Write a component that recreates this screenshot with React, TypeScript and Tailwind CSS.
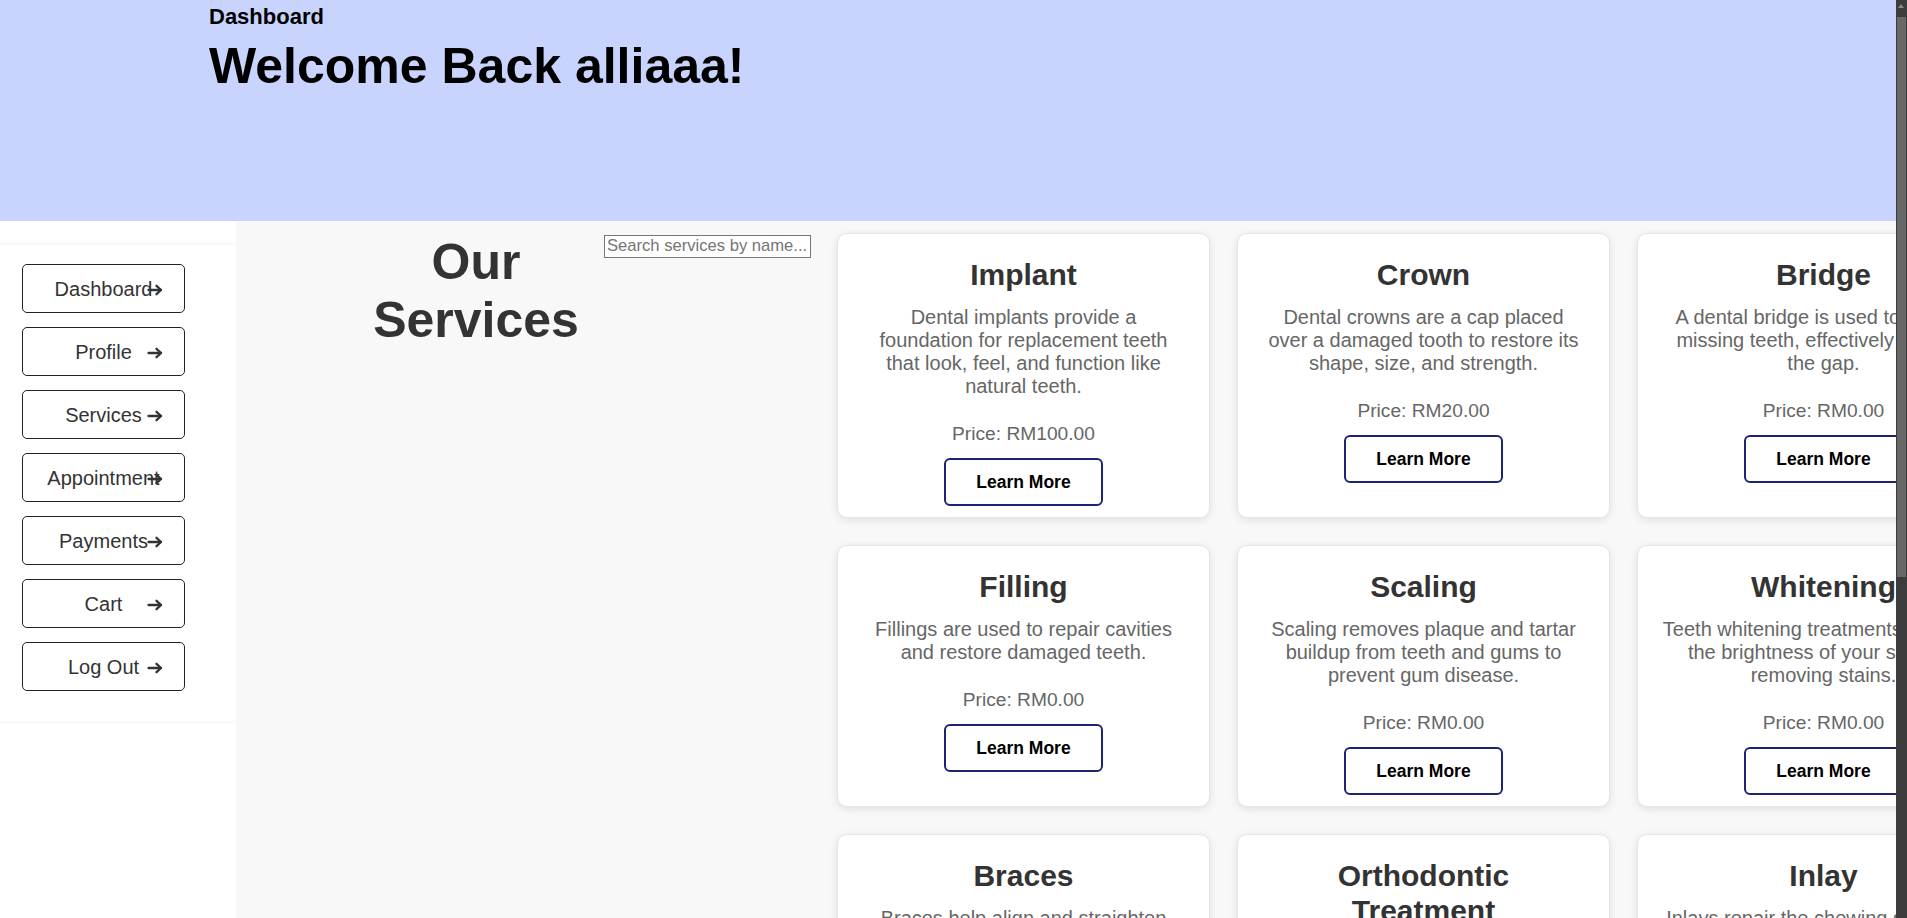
import React from "react";

type Service = { name: string; desc: string; price: string };

const services: Service[] = [
  {
    name: "Implant",
    desc: "Dental implants provide a foundation for replacement teeth that look, feel, and function like natural teeth.",
    price: "RM100.00",
  },
  {
    name: "Crown",
    desc: "Dental crowns are a cap placed over a damaged tooth to restore its shape, size, and strength.",
    price: "RM20.00",
  },
  {
    name: "Bridge",
    desc: "A dental bridge is used to replace missing teeth, effectively bridging the gap.",
    price: "RM0.00",
  },
  {
    name: "Filling",
    desc: "Fillings are used to repair cavities and restore damaged teeth.",
    price: "RM0.00",
  },
  {
    name: "Scaling",
    desc: "Scaling removes plaque and tartar buildup from teeth and gums to prevent gum disease.",
    price: "RM0.00",
  },
  {
    name: "Whitening",
    desc: "Teeth whitening treatments enhance the brightness of your smile by removing stains.",
    price: "RM0.00",
  },
  {
    name: "Braces",
    desc: "Braces help align and straighten teeth to improve your bite and smile.",
    price: "RM0.00",
  },
  {
    name: "Orthodontic Treatment",
    desc: "Orthodontic treatment corrects misaligned teeth and jaws for a healthier smile.",
    price: "RM0.00",
  },
  {
    name: "Inlay",
    desc: "Inlays repair the chewing surface of teeth damaged by decay.",
    price: "RM0.00",
  },
];

const navItems = ["Dashboard", "Profile", "Services", "Appointment", "Payments", "Cart", "Log Out"];

function Arrow() {
  return (
    <svg
      width="16"
      height="12"
      viewBox="0 0 16 12"
      fill="none"
      stroke="#333"
      strokeWidth="2.3"
      strokeLinecap="round"
      strokeLinejoin="round"
    >
      <path d="M1.5 6h12.5" />
      <path d="M9.5 1.8L14 6L9.5 10.2" />
    </svg>
  );
}

function ServiceCard({ s }: { s: Service }) {
  return (
    <div className="flex flex-col items-center rounded-[10px] border border-[#e6e6e6] bg-white px-[23.5px] pt-[24px] pb-[11px] text-center shadow-[0_2px_8px_rgba(0,0,0,0.1)]">
      <h3 className="mb-[13px] max-w-[300px] text-[30px] font-bold leading-[34.5px] text-[#333]">{s.name}</h3>
      <p className="w-full text-[20px] leading-[23px] text-[#666]">{s.desc}</p>
      <p className="mt-[25px] text-[19.2px] leading-[22px] text-[#666]">Price: {s.price}</p>
      <button className="mt-[13.5px] h-[48px] w-[159px] rounded-[6px] border-2 border-[#1c2473] bg-white text-[17.5px] font-bold text-black">
        Learn More
      </button>
    </div>
  );
}

export default function App() {
  return (
    <div className="relative h-[918px] w-full overflow-hidden bg-white font-['Liberation_Sans',Arial,Helvetica,sans-serif]">
      <div className="min-w-max">
        <header className="h-[221px] bg-[#c9d4fe] pl-[209px] pt-[4px]">
          <div className="text-[22px] font-bold leading-[25px] text-black">Dashboard</div>
          <h1 className="mt-[9px] text-[50px] font-bold leading-[57px] text-black">Welcome Back alliaaa!</h1>
        </header>

        <div className="flex">
          <aside className="w-[236px] shrink-0 bg-white">
            <nav className="mt-[24px] flex flex-col gap-[14px] bg-white pt-[19px] pb-[30px] pl-[22px] shadow-[0_0_6px_rgba(0,0,0,0.07)]">
              {navItems.map((item) => (
                <button
                  key={item}
                  className="relative h-[49px] w-[163px] rounded-[5px] border border-[#222] bg-white text-center text-[20px] text-[#333]"
                >
                  <span>{item}</span>
                  <span className="absolute right-[21px] top-1/2 mt-[1px] flex -translate-y-1/2">
                    <Arrow />
                  </span>
                </button>
              ))}
            </nav>
          </aside>

          <main className="flex min-h-[697px] flex-1 items-start bg-[#f8f8f8] pt-[12px] pb-[40px]">
            <h2 className="ml-[116px] w-[248px] shrink-0 text-center text-[50px] font-bold leading-[58px] text-[#333]">
              Our Services
            </h2>
            <input
              type="text"
              placeholder="Search services by name..."
              className="ml-[4px] mt-[2px] h-[23px] w-[207px] shrink-0 border border-[#767676] bg-white px-[2px] text-[16.6px] text-[#333] placeholder:text-[#757575]"
            />
            <div className="ml-[26px] grid shrink-0 grid-cols-[repeat(3,373px)] gap-[27px]">
              {services.map((s) => (
                <ServiceCard key={s.name} s={s} />
              ))}
            </div>
          </main>
        </div>
      </div>

      <div className="absolute right-0 top-0 h-full w-[11px] bg-[#3c3c3c]">
        <div className="absolute left-[2px] top-[4px] h-0 w-0 border-x-[3px] border-b-[4px] border-x-transparent border-b-[#8a8a8a]" />
        <div className="absolute left-[1px] top-[17px] h-[560px] w-[9px] bg-[#686868]" />
      </div>
    </div>
  );
}
